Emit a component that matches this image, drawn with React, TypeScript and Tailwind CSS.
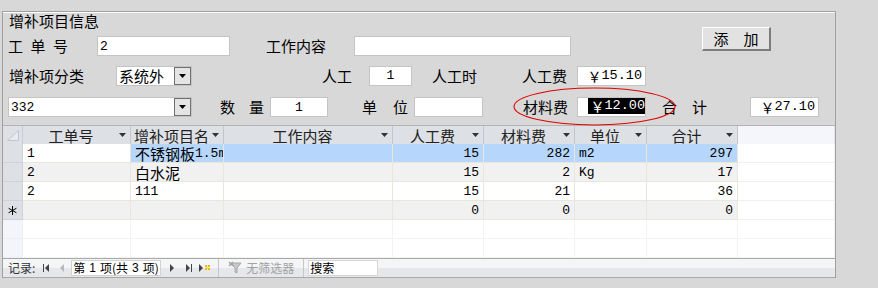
import React from "react";

const cjk = "font-['Noto_Sans_CJK_SC',sans-serif]";
const mono = "font-['Liberation_Mono','Noto_Sans_CJK_SC',monospace]";
const CJK_RE = /([\u2e80-\u9fff\uff00-\uffef]+)/;

// split text so CJK runs and latin/digit runs get their own font
function Mixed({ text }: { text: string }) {
  return (
    <>
      {text
        .split(CJK_RE)
        .filter(Boolean)
        .map((part, i) =>
          CJK_RE.test(part) ? (
            <span key={i} className={`${cjk} text-[15px] leading-[17px]`}>
              {part}
            </span>
          ) : (
            <span key={i} className={`${mono} text-[13px] leading-[17px]`}>
              {part}
            </span>
          )
        )}
    </>
  );
}

function Label({ text, w, spread }: { text: string; w: string; spread?: boolean }) {
  return (
    <div
      className={`${w} ${cjk} text-[15px] leading-[18px] text-black flex shrink-0 ${
        spread ? "justify-between" : ""
      }`}
    >
      {spread ? text.split("").map((c, i) => <span key={i}>{c}</span>) : text}
    </div>
  );
}

function Box({
  w,
  children,
  align = "left",
}: {
  w: string;
  children?: React.ReactNode;
  align?: "left" | "center" | "right";
}) {
  const justify =
    align === "center" ? "justify-center" : align === "right" ? "justify-end pr-[3px]" : "justify-start pl-[2px]";
  return (
    <div className={`${w} h-[20px] shrink-0 bg-white border border-[#c4c4c4] flex items-center ${justify} overflow-hidden`}>
      {children}
    </div>
  );
}

function DropBtn() {
  return (
    <div className="w-[17px] h-[18px] ml-auto bg-[#e4e4e4] border border-[#707070] flex items-center justify-center">
      <svg width="7" height="4" viewBox="0 0 7 4">
        <path d="M0 0H7L3.5 4Z" fill="#000" />
      </svg>
    </div>
  );
}

function Combo({ w, text }: { w: string; text: string }) {
  return (
    <div className={`${w} h-[20px] shrink-0 bg-white border border-[#c4c4c4] flex items-center pl-[2px]`}>
      <Mixed text={text} />
      <DropBtn />
    </div>
  );
}

function Money({ v, selected }: { v: string; selected?: boolean }) {
  if (selected) {
    return (
      <span className="self-start h-[16px] bg-black text-white flex items-center pl-[2px] -mr-[3px]">
        <span className={`${cjk} text-[14px] leading-[16px]`}>￥</span>
        <span className={`${mono} text-[13.5px] leading-[16px]`}>{v}</span>
      </span>
    );
  }
  return (
    <span className="flex items-center">
      <span className={`${cjk} text-[14px] leading-[16px]`}>￥</span>
      <span className={`${mono} text-[13.5px] leading-[16px]`}>{v}</span>
    </span>
  );
}

const columns = [
  { title: "工单号", w: "w-[108px]", align: "left" },
  { title: "增补项目名", w: "w-[93px]", align: "left" },
  { title: "工作内容", w: "w-[169px]", align: "left" },
  { title: "人工费", w: "w-[91px]", align: "right" },
  { title: "材料费", w: "w-[91px]", align: "right" },
  { title: "单位", w: "w-[72px]", align: "left" },
  { title: "合计", w: "w-[91px]", align: "right" },
];

const rows = [
  { sel: false, cells: ["1", "不锈钢板1.5m", "", "15", "282", "m2", "297"], current: true },
  { sel: false, cells: ["2", "白水泥", "", "15", "2", "Kg", "17"] },
  { sel: false, cells: ["2", "111", "", "15", "21", "", "36"] },
  { sel: true, cells: ["", "", "", "0", "0", "", "0"] },
];

function HeaderArrow() {
  return (
    <svg width="7" height="4" viewBox="0 0 7 4" className="shrink-0 mr-[4px]">
      <path d="M0 0H7L3.5 4Z" fill="#333" />
    </svg>
  );
}

function NewRowMark() {
  return (
    <svg width="9" height="9" viewBox="0 0 9 9">
      <path d="M4.5 0V9M0.6 2.25L8.4 6.75M0.6 6.75L8.4 2.25" stroke="#000" strokeWidth="1" />
    </svg>
  );
}

function Grid() {
  return (
    <div className="h-[133px] bg-white flex flex-col overflow-hidden">
      {/* header */}
      <div className="h-[19px] shrink-0 flex border-t border-[#b4b4b4]">
        <div className="w-[20px] shrink-0 bg-[#dde0e5] border-r border-[#c9ccd2] flex items-end justify-center pb-[3px]">
          <svg width="12" height="11" viewBox="0 0 12 11">
            <path d="M11.5 0.5V10.5H0.5Z" fill="#e8eaee" stroke="#c2c6cc" />
          </svg>
        </div>
        {columns.map((c) => (
          <div
            key={c.title}
            className={`${c.w} shrink-0 bg-[#dde0e5] border-r border-[#c3c6cc] flex items-center`}
          >
            <div className={`flex-1 min-w-0 whitespace-nowrap text-center ${cjk} text-[15px] leading-[17px] text-[#222]`}>
              {c.title}
            </div>
            <HeaderArrow />
          </div>
        ))}
        <div className="flex-1 bg-[#f5f6fc] border-r border-[#e4e4ea]" />
      </div>
      {/* data rows */}
      {rows.map((r, ri) => {
        const alt = ri % 2 === 1;
        return (
          <div key={ri} className="h-[19px] shrink-0 flex">
            <div className="w-[20px] shrink-0 bg-[#dde0e5] border-r border-b border-[#cfd2d8] flex items-center justify-center">
              {r.sel && <NewRowMark />}
            </div>
            {columns.map((c, ci) => {
              const bg = r.current && ci > 0 ? "bg-[#b6d7fb]" : alt ? "bg-[#f1f1f1]" : "bg-white";
              return (
                <div
                  key={ci}
                  className={`${c.w} shrink-0 ${bg} border-r border-b border-[#e9e6dd] flex items-center px-[4px] overflow-hidden whitespace-nowrap text-black ${
                    c.align === "right" ? "justify-end" : ""
                  }`}
                >
                  <Mixed text={r.cells[ci]} />
                </div>
              );
            })}
            <div className="flex-1 bg-white border-r border-b border-[#f0f0f0]" />
          </div>
        );
      })}
      {[0, 1].map((i) => (
        <div key={"e" + i} className="h-[19px] shrink-0 flex">
          <div className="w-[20px] shrink-0 bg-[#f4f5fb] border-r border-b border-[#eceef4]" />
          {columns.map((c, ci) => (
            <div key={ci} className={`${c.w} shrink-0 bg-white border-r border-b border-[#f4f3ef]`} />
          ))}
          <div className="flex-1 bg-white border-r border-b border-[#f4f4f4]" />
        </div>
      ))}
    </div>
  );
}

function NavBar() {
  const digit = "font-['Liberation_Sans',sans-serif] mx-[4px]";
  return (
    <div className={`h-[20px] border-t border-b border-[#a9a9a9] bg-[linear-gradient(#f4f5f7_50%,#e6e7ea_50%)] flex items-center text-[12px] ${cjk}`}>
      <span className="ml-[5px] text-[#333] leading-[16px]">记录:</span>
      <svg width="6" height="8" viewBox="0 0 6 8" className="ml-[8px]">
        <rect x="0" y="0" width="1" height="8" fill="#444" />
        <path d="M6 0V8L2 4Z" fill="#444" />
      </svg>
      <svg width="4" height="8" viewBox="0 0 4 8" className="ml-[11px]">
        <path d="M4 0V8L0 4Z" fill="#b8b8b8" />
      </svg>
      <div className="ml-[7px] w-[90px] h-[16px] bg-white border border-[#d2d2d2] flex items-center pl-[1px] text-black whitespace-nowrap leading-[14px]">
        第<span className={digit}>1</span>项(共<span className={digit}>3</span>项)
      </div>
      <svg width="4" height="8" viewBox="0 0 4 8" className="ml-[9px]">
        <path d="M0 0V8L4 4Z" fill="#444" />
      </svg>
      <svg width="6" height="8" viewBox="0 0 6 8" className="ml-[12px]">
        <path d="M0 0V8L4 4Z" fill="#444" />
        <rect x="5" y="0" width="1" height="8" fill="#444" />
      </svg>
      <svg width="13" height="8" viewBox="0 0 13 8" className="ml-[7px]">
        <path d="M0 0V8L4 4Z" fill="#444" />
        <g fill="#e8b800">
          <rect x="6" y="1" width="2" height="2" />
          <rect x="9" y="1" width="2" height="2" />
          <rect x="6" y="4" width="2" height="2" />
          <rect x="9" y="4" width="2" height="2" />
          <rect x="7.5" y="2.5" width="2" height="2" fill="#f6d860" />
        </g>
      </svg>
      <div className="ml-[6px] w-px h-[18px] bg-[#c6c6c6]" />
      <svg width="17" height="14" viewBox="0 0 17 14" className="ml-[9px]">
        <path d="M3 2H13L9 7V12L7 11V7Z" fill="#c8c8c8" stroke="#a8a8a8" />
        <path d="M1 1L5 5M5 1L1 5" stroke="#a0a0a0" strokeWidth="1.4" />
      </svg>
      <span className="ml-[1px] text-[#a2a2a2] leading-[16px]">无筛选器</span>
      <div className="ml-[9px] w-px h-[18px] bg-[#c6c6c6]" />
      <div className="ml-[4px] w-[70px] h-[16px] bg-white border border-[#d6d6d6] flex items-center pl-[1px] text-black leading-[14px]">
        搜索
      </div>
    </div>
  );
}

export default function App() {
  return (
    <div className="w-[878px] h-[288px] bg-[#d8d8d8] pt-[11px] pl-[2px] relative overflow-hidden">
      <div className="w-[834px] border-t border-l border-r border-[#a0a0a0]">
        {/* form area */}
        <div className="h-[113px] border-t border-white flex flex-col">
          <div className={`ml-[6px] ${cjk} text-[15px] leading-[16px] text-black`}>增补项目信息</div>

          <div className="mt-[7px] h-[20px] flex items-center">
            <div className="ml-[5px]">
              <Label text="工单号" w="w-[60px]" spread />
            </div>
            <div className="ml-[29px]">
              <Box w="w-[133px]">
                <Mixed text="2" />
              </Box>
            </div>
            <div className="ml-[36px]">
              <Label text="工作内容" w="w-[60px]" />
            </div>
            <div className="ml-[28px]">
              <Box w="w-[217px]" />
            </div>
            <button className="ml-[131px] self-start -mt-[9px] w-[69px] h-[24px] shrink-0 bg-[#e2e2e2] border-t border-l border-white border-b-2 border-r-2 border-b-[#7c7c7c] border-r-[#7c7c7c] flex items-center justify-center gap-[15px]">
              <span className={`${cjk} text-[15px] leading-[16px] text-black`}>添</span>
              <span className={`${cjk} text-[15px] leading-[16px] text-black`}>加</span>
            </button>
          </div>

          <div className="mt-[9px] h-[21px] flex items-center">
            <div className="ml-[6px]">
              <Label text="增补项分类" w="w-[75px]" />
            </div>
            <div className="ml-[32px]">
              <Combo w="w-[76px]" text="系统外" />
            </div>
            <div className="ml-[130px]">
              <Label text="人工" w="w-[30px]" />
            </div>
            <div className="ml-[17px]">
              <Box w="w-[43px]" align="center">
                <Mixed text="1" />
              </Box>
            </div>
            <div className="ml-[20px]">
              <Label text="人工时" w="w-[45px]" />
            </div>
            <div className="ml-[45px]">
              <Label text="人工费" w="w-[45px]" />
            </div>
            <div className="ml-[10px]">
              <Box w="w-[69px]" align="right">
                <Money v="15.10" />
              </Box>
            </div>
          </div>

          <div className="mt-[11px] h-[20px] flex items-center">
            <div className="ml-[5px]">
              <Combo w="w-[184px]" text="332" />
            </div>
            <div className="ml-[28px]">
              <Label text="数量" w="w-[44px]" spread />
            </div>
            <div className="ml-[6px]">
              <Box w="w-[58px]" align="center">
                <Mixed text="1" />
              </Box>
            </div>
            <div className="ml-[34px]">
              <Label text="单位" w="w-[46px]" spread />
            </div>
            <div className="ml-[6px]">
              <Box w="w-[69px]" />
            </div>
            <div className="ml-[40px]">
              <Label text="材料费" w="w-[45px]" />
            </div>
            <div className="ml-[9px]">
              <Box w="w-[69px]" align="right">
                <Money v="12.00" selected />
              </Box>
            </div>
            <div className="ml-[16px]">
              <Label text="合计" w="w-[45px]" spread />
            </div>
            <div className="ml-[43px]">
              <Box w="w-[69px]" align="right">
                <Money v="27.10" />
              </Box>
            </div>
          </div>
        </div>

        <Grid />
        <NavBar />
      </div>

      {/* red hand-drawn ellipse marking the material cost field */}
      <svg
        className="absolute left-[513px] top-[87px] pointer-events-none"
        width="164"
        height="40"
        viewBox="0 0 164 40"
      >
        <ellipse cx="81.5" cy="19.5" rx="80.5" ry="18.5" fill="none" stroke="#e00000" strokeWidth="1.1" />
      </svg>
    </div>
  );
}
